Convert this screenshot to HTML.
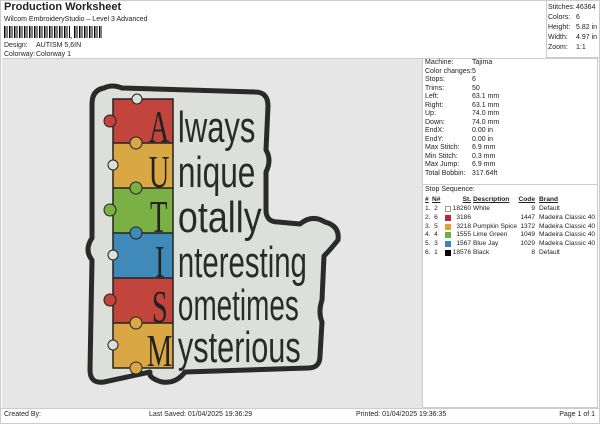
<!DOCTYPE html>
<html><head><style>
*{margin:0;padding:0;box-sizing:border-box}
body{width:600px;height:424px;background:#fff;font-family:"Liberation Sans",sans-serif;font-size:7px;color:#222;position:relative;overflow:hidden}
.a{position:absolute;white-space:nowrap}
.r{position:absolute;white-space:nowrap;text-align:right}
.sw{position:absolute;width:6px;height:6px}
</style></head><body>
<div class="a" style="left:4px;top:1px;font-size:11px;font-weight:bold">Production Worksheet</div>
<div class="a" style="left:4px;top:16px">Wilcom EmbroideryStudio – Level 3 Advanced</div>
<div class="a" style="left:4px;top:26px;width:98px;height:12px;background:repeating-linear-gradient(90deg,#000 0 1.5px,#fff 1.5px 2.5px,#000 2.5px 3.5px,#fff 3.5px 5px)"></div>
<div class="a" style="left:70px;top:26px;width:4px;height:12px;background:#fff"></div>
<div class="a" style="left:70px;top:33px;font-weight:bold">,</div>
<div class="a" style="left:4px;top:42px">Design:</div><div class="a" style="left:36px;top:42px">AUTISM 5,6IN</div>
<div class="a" style="left:4px;top:51px">Colorway:</div><div class="a" style="left:36px;top:51px">Colorway 1</div>
<div class="a" style="left:0;top:0;width:600px;height:424px;border:1px solid #ccc"></div>
<div class="a" style="left:546px;top:0;width:53px;height:58px;border-left:1px solid #ccc;border-bottom:1px solid #ccc"></div>
<div class="a" style="left:548px;top:3px;line-height:10px">Stitches:<br>Colors:<br>Height:<br>Width:<br>Zoom:</div>
<div class="a" style="left:576px;top:3px;line-height:10px">46364<br>6<br>5.82 in<br>4.97 in<br>1:1</div>
<div class="a" style="left:2px;top:58px;width:420px;height:350px;background:#e6e6e6;border-top:1px solid #ccc"></div>
<div class="a" style="left:422px;top:58px;width:176px;height:350px;border:1px solid #ccc"></div>
<div class="a" style="left:425px;top:59px;line-height:8.5px">Machine:<br>Color changes:<br>Stops:<br>Trims:<br>Left:<br>Right:<br>Up:<br>Down:<br>EndX:<br>EndY:<br>Max Stitch:<br>Min Stitch:<br>Max Jump:<br>Total Bobbin:</div>
<div class="a" style="left:472px;top:59px;line-height:8.5px">Tajima<br>5<br>6<br>50<br>63.1 mm<br>63.1 mm<br>74.0 mm<br>74.0 mm<br>0.00 in<br>0.00 in<br>6.9 mm<br>0.3 mm<br>6.9 mm<br>317.64ft</div>
<div class="a" style="left:422px;top:184px;width:176px;border-top:1px solid #ccc"></div>
<div class="a" style="left:425px;top:186px">Stop Sequence:</div>
<div style="position:absolute;left:0;top:196px;width:600px;height:70px;line-height:8.8px;font-size:6.6px">
<div class="a" style="left:425px;top:0;font-weight:bold;text-decoration:underline">#</div>
<div class="a" style="left:432px;top:0;font-weight:bold;text-decoration:underline">N#</div>
<div class="r" style="right:129px;top:0;font-weight:bold;text-decoration:underline">St.</div>
<div class="a" style="left:473px;top:0;font-weight:bold;text-decoration:underline">Description</div>
<div class="r" style="right:65px;top:0;font-weight:bold;text-decoration:underline">Code</div>
<div class="a" style="left:539px;top:0;font-weight:bold;text-decoration:underline">Brand</div>
<div class="a" style="left:425px;top:9px">1.&nbsp;&nbsp;2<br>2.&nbsp;&nbsp;6<br>3.&nbsp;&nbsp;5<br>4.&nbsp;&nbsp;4<br>5.&nbsp;&nbsp;3<br>6.&nbsp;&nbsp;1</div>
<div class="sw" style="left:445px;top:10px;border:1px solid #999;background:#fff"></div>
<div class="sw" style="left:445px;top:19px;background:#c0262b"></div>
<div class="sw" style="left:445px;top:28px;background:#e89b2a"></div>
<div class="sw" style="left:445px;top:36px;background:#6ab03a"></div>
<div class="sw" style="left:445px;top:45px;background:#3b82c4"></div>
<div class="sw" style="left:445px;top:54px;background:#000"></div>
<div class="r" style="right:129px;top:9px">18260<br>3186<br>3218<br>1555<br>1567<br>18576</div>
<div class="a" style="left:473px;top:9px">White<br>&nbsp;<br>Pumpkin Spice<br>Lime Green<br>Blue Jay<br>Black</div>
<div class="r" style="right:65px;top:9px">9<br>1447<br>1372<br>1049<br>1029<br>8</div>
<div class="a" style="left:539px;top:9px">Default<br>Madeira Classic 40<br>Madeira Classic 40<br>Madeira Classic 40<br>Madeira Classic 40<br>Default</div>
</div>
<div class="a" style="left:0;top:408px;width:600px;border-top:1px solid #ccc"></div>
<div class="a" style="left:4px;top:411px">Created By:</div>
<div class="a" style="left:149px;top:411px">Last Saved: 01/04/2025 19:36:29</div>
<div class="a" style="left:356px;top:411px">Printed: 01/04/2025 19:36:35</div>
<div class="a" style="right:5px;top:411px">Page 1 of 1</div>

<svg class="a" style="left:0;top:0" width="600" height="424">
<defs><path id="sh" d="M104,88 Q112,84 122,88 L255,92 Q268,92 268,106 L266,150 Q272,160 266,172 L266,210 Q266,222 278,222 L300,224 Q312,214 325,222 Q340,226 338,240 Q330,250 324,256 L322,300 Q318,312 322,322 L320,356 Q320,368 308,368 L185,372 Q176,384 162,382 Q148,378 150,372 L104,382 Q90,384 90,370 L92,260 Q84,250 92,238 L92,104 Q92,90 104,88 Z"/></defs>
<use href="#sh" fill="#dde0da" stroke="#2a2a2a" stroke-width="5" stroke-linejoin="round"/>
<rect x="113" y="99" width="60" height="44" fill="#c1453c"/>
<rect x="113" y="143" width="60" height="45" fill="#d9a844"/>
<rect x="113" y="188" width="60" height="45" fill="#7bb045"/>
<rect x="113" y="233" width="60" height="45" fill="#3f8ab9"/>
<rect x="113" y="278" width="60" height="45" fill="#c1453c"/>
<rect x="113" y="323" width="60" height="45" fill="#d9a844"/>
<g stroke="#222" stroke-width="1.5" fill="none">
<rect x="113" y="99" width="60" height="269"/>
<line x1="113" y1="143" x2="173" y2="143"/><line x1="113" y1="188" x2="173" y2="188"/><line x1="113" y1="233" x2="173" y2="233"/><line x1="113" y1="278" x2="173" y2="278"/><line x1="113" y1="323" x2="173" y2="323"/>
</g>
<g fill="#d9a844" stroke="#222" stroke-width="1"><circle cx="136" cy="143" r="6"/></g>
<g fill="#7bb045" stroke="#222" stroke-width="1"><circle cx="136" cy="188" r="6"/></g>
<g fill="#3f8ab9" stroke="#222" stroke-width="1"><circle cx="136" cy="233" r="6"/></g>
<g fill="#d9a844" stroke="#222" stroke-width="1"><circle cx="136" cy="323" r="6"/><circle cx="136" cy="368" r="6"/></g>
<g fill="#dde0da" stroke="#222" stroke-width="1"><circle cx="113" cy="165" r="5"/><circle cx="113" cy="255" r="5"/><circle cx="113" cy="345" r="5"/><circle cx="137" cy="99" r="5"/></g>
<g fill="#c1453c" stroke="#222" stroke-width="1"><circle cx="110" cy="121" r="6"/><circle cx="110" cy="300" r="6"/></g>
<g fill="#7bb045" stroke="#222" stroke-width="1"><circle cx="110" cy="210" r="6"/></g>
<g font-family="Liberation Serif,serif" font-size="46" fill="#222" transform="scale(0.62,1)">
<text x="240" y="142">A</text><text x="240" y="187">U</text><text x="242" y="232">T</text><text x="250" y="277">I</text><text x="245" y="322">S</text><text x="237" y="366">M</text>
</g>
<g font-family="Liberation Sans Narrow,Liberation Sans,sans-serif" font-size="44" fill="#2a2a2a" transform="scale(0.62,1)">
<text x="287" y="142" textLength="125" lengthAdjust="spacingAndGlyphs">lways</text>
<text x="287" y="187" textLength="125" lengthAdjust="spacingAndGlyphs">nique</text>
<text x="287" y="232" textLength="135" lengthAdjust="spacingAndGlyphs">otally</text>
<text x="287" y="277" textLength="208" lengthAdjust="spacingAndGlyphs">nteresting</text>
<text x="287" y="320" textLength="195" lengthAdjust="spacingAndGlyphs">ometimes</text>
<text x="287" y="362" textLength="198" lengthAdjust="spacingAndGlyphs">ysterious</text>
</g>
</svg>
</body></html>
